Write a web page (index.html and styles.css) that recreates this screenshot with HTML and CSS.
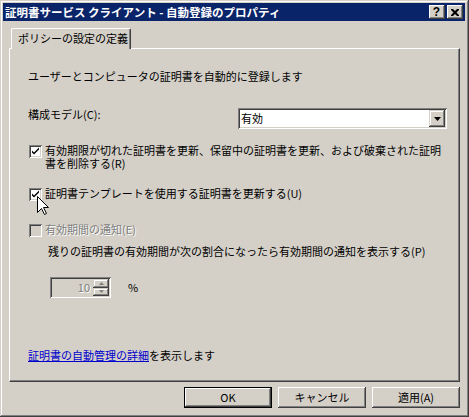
FILE: index.html
```html
<!DOCTYPE html>
<html lang="ja">
<head>
<meta charset="utf-8">
<link rel="stylesheet" href="styles.css">
</head>
<body>
<div class="window">
  <div class="titlebar">
    <span class="title">証明書サービス クライアント - 自動登録のプロパティ</span>
    <div class="tbtns">
      <span class="tbtn help">?</span>
      <span class="tbtn close"><svg width="8" height="7" viewBox="0 0 8 7"><path d="M0 0h2l2 2 2-2h2v1l-2.5 2.5L8 6v1H6L4 5 2 7H0V6l2.5-2.5L0 1z" fill="#000"/></svg></span>
    </div>
  </div>
  <div class="body">
    <div class="tabs"><div class="tab">ポリシーの設定の定義</div></div>
    <div class="page">
      <p class="intro">ユーザーとコンピュータの証明書を自動的に登録します</p>
      <div class="model-row">
        <span class="model-label">構成モデル(C):</span>
        <div class="combo">
          <span class="combo-val">有効</span>
          <span class="combo-btn"><svg width="7" height="4" viewBox="0 0 7 4"><path d="M0 0h7L3.5 4z" fill="#000"/></svg></span>
        </div>
      </div>
      <div class="check cb1">
        <span class="box"><svg width="9" height="9" viewBox="0 0 9 9"><path d="M1 3.5l2 2 5-5v2l-5 5-2-2z" fill="#000"/></svg></span>
        <span class="lbl">有効期限が切れた証明書を更新、保留中の証明書を更新、および破棄された証明<br>書を削除する(R)</span>
      </div>
      <div class="check cb2">
        <span class="box"><svg width="9" height="9" viewBox="0 0 9 9"><path d="M1 3.5l2 2 5-5v2l-5 5-2-2z" fill="#000"/></svg></span>
        <span class="lbl">証明書テンプレートを使用する証明書を更新する(U)</span>
        <svg class="cursor" width="13" height="20" viewBox="0 0 13 20"><path d="M0.5 0.5V16.5L4.5 12.5L7.5 18.5L9.5 17.5L6.5 11.5H11.5Z" fill="#fff" stroke="#000" stroke-width="1" stroke-linejoin="miter"/></svg>
      </div>
      <div class="check cb3 disabled">
        <span class="box"></span>
        <span class="lbl">有効期間の通知(E)</span>
      </div>
      <p class="desc">残りの証明書の有効期間が次の割合になったら有効期間の通知を表示する(P)</p>
      <div class="spin-row">
        <div class="spin">
          <span class="spin-val">10</span>
          <span class="spin-btns">
            <span class="sbtn"><svg width="5" height="3" viewBox="0 0 5 3"><path d="M2.5 0L5 3H0z" fill="#808080"/></svg></span>
            <span class="sbtn"><svg width="5" height="3" viewBox="0 0 5 3"><path d="M0 0h5L2.5 3z" fill="#808080"/></svg></span>
          </span>
        </div>
        <span class="pct">%</span>
      </div>
      <p class="link-row"><a class="link">証明書の自動管理の詳細</a>を表示します</p>
    </div>
    <div class="buttons">
      <span class="btn default">OK</span>
      <span class="btn">キャンセル</span>
      <span class="btn">適用(A)</span>
    </div>
  </div>
</div>
</body>
</html>
```
FILE: styles.css
```css
* { box-sizing: border-box; }
html, body { margin: 0; padding: 0; background: #d4d0c8; }
body {
  font-family: "Noto Sans CJK JP", "Noto Sans", sans-serif;
  font-size: 11px;
  color: #000;
}
.window {
  width: 469px;
  height: 417px;
  background: #d4d0c8;
  padding: 3px 4px 4px 3px;
  box-shadow: inset -1px -1px 0 #404040, inset 1px 1px 0 #d4d0c8, inset -2px -2px 0 #808080, inset 2px 2px 0 #fff;
  position: relative;
}
.titlebar {
  height: 18px;
  background: #0a246a;
  display: flex;
  align-items: center;
  justify-content: space-between;
  padding: 0 2px 0 2px;
}
.title {
  color: #fff;
  font-weight: bold;
  font-size: 11.5px;
  line-height: 18px;
}
.tbtns { display: flex; gap: 2px; }
.tbtn {
  width: 16px;
  height: 14px;
  background: #d4d0c8;
  box-shadow: inset -1px -1px 0 #404040, inset 1px 1px 0 #fff, inset -2px -2px 0 #808080;
  display: flex;
  align-items: center;
  justify-content: center;
}
.help {
  font-family: "Liberation Sans", sans-serif;
  font-weight: bold;
  font-size: 12px;
  line-height: 14px;
  padding-right: 1px;
}
.close svg { margin-right: 1px; }
.body { padding: 7px 5px 0 6px; }
.tabs { display: flex; height: 20px; position: relative; z-index: 1; }
.tab {
  margin-left: 2px;
  width: 120px;
  height: 21px;
  padding: 3px 0 0 6px;
  background: #d4d0c8;
  border-left: 1px solid #fff;
  border-top: 1px solid #fff;
  border-right: 1px solid #404040;
  border-top-left-radius: 2px;
  border-top-right-radius: 2px;
  box-shadow: inset -1px 0 0 #808080;
  line-height: 13px;
}
.page {
  height: 334px;
  border: 1px solid;
  border-color: #fff #404040 #404040 #fff;
  box-shadow: inset -1px -1px 0 #808080;
  padding: 21px 11px 0 18px;
}
.intro { margin: 0; line-height: 13px; }
.model-row { display: flex; margin-top: 25px; height: 21px; }
.model-label { width: 210px; line-height: 13px; }
.combo {
  width: 209px;
  height: 21px;
  background: #fff;
  box-shadow: inset 1px 1px 0 #808080, inset -1px -1px 0 #fff, inset 2px 2px 0 #404040, inset -2px -2px 0 #d4d0c8;
  display: flex;
  align-items: center;
  justify-content: space-between;
  padding: 2px;
}
.combo-val { padding-left: 1px; line-height: 13px; }
.combo-btn {
  width: 16px;
  height: 17px;
  background: #d4d0c8;
  box-shadow: inset -1px -1px 0 #404040, inset 1px 1px 0 #d4d0c8, inset -2px -2px 0 #808080, inset 2px 2px 0 #fff;
  display: flex;
  align-items: center;
  justify-content: center;
}
.check { display: flex; align-items: flex-start; position: relative; }
.box {
  width: 13px;
  height: 13px;
  margin: 1px 3px 0 1px;
  background: #fff;
  box-shadow: inset 1px 1px 0 #808080, inset -1px -1px 0 #fff, inset 2px 2px 0 #404040, inset -2px -2px 0 #d4d0c8;
  display: flex;
  align-items: center;
  justify-content: center;
  flex: none;
}
.lbl { line-height: 13px; white-space: nowrap; }
.cb1 { margin-top: 15px; }
.cb2 { margin-top: 17px; }
.cb3 { margin-top: 22px; }
.disabled .box { background: #d4d0c8; }
.disabled .lbl { color: #808080; text-shadow: 1px 1px 0 #fff; }
.cursor { position: absolute; left: 9px; top: 9px; }
.desc { margin: 8px 0 0 20px; line-height: 12px; }
.spin-row { display: flex; align-items: center; margin-top: 20px; margin-left: 22px; height: 21px; }
.spin {
  width: 61px;
  height: 21px;
  background: #d4d0c8;
  box-shadow: inset 1px 1px 0 #808080, inset -1px -1px 0 #fff, inset 2px 2px 0 #404040, inset -2px -2px 0 #d4d0c8;
  display: flex;
  align-items: center;
  justify-content: flex-end;
  padding: 2px;
}
.spin-val { color: #808080; text-shadow: 1px 1px 0 #fff; margin-right: 3px; line-height: 13px; }
.spin-btns { display: flex; flex-direction: column; width: 16px; height: 17px; }
.sbtn {
  flex: 1;
  background: #d4d0c8;
  box-shadow: inset -1px -1px 0 #404040, inset 1px 1px 0 #d4d0c8, inset -2px -2px 0 #808080, inset 2px 2px 0 #fff;
  display: flex;
  align-items: center;
  justify-content: center;
}
.pct { margin-left: 17px; line-height: 13px; }
.link-row { margin: 51px 0 0 0; line-height: 12px; }
.link { color: #0000cc; text-decoration: underline; }
.buttons { display: flex; justify-content: flex-end; gap: 6px; margin-top: 5px; }
.btn {
  width: 88px;
  height: 21px;
  display: flex;
  align-items: center;
  justify-content: center;
  background: #d4d0c8;
  box-shadow: inset -1px -1px 0 #404040, inset 1px 1px 0 #fff, inset -2px -2px 0 #808080;
  line-height: 13px;
}
.btn.default {
  box-shadow: inset 0 0 0 1px #000, inset -2px -2px 0 #404040, inset 2px 2px 0 #fff, inset -3px -3px 0 #808080;
}
```
